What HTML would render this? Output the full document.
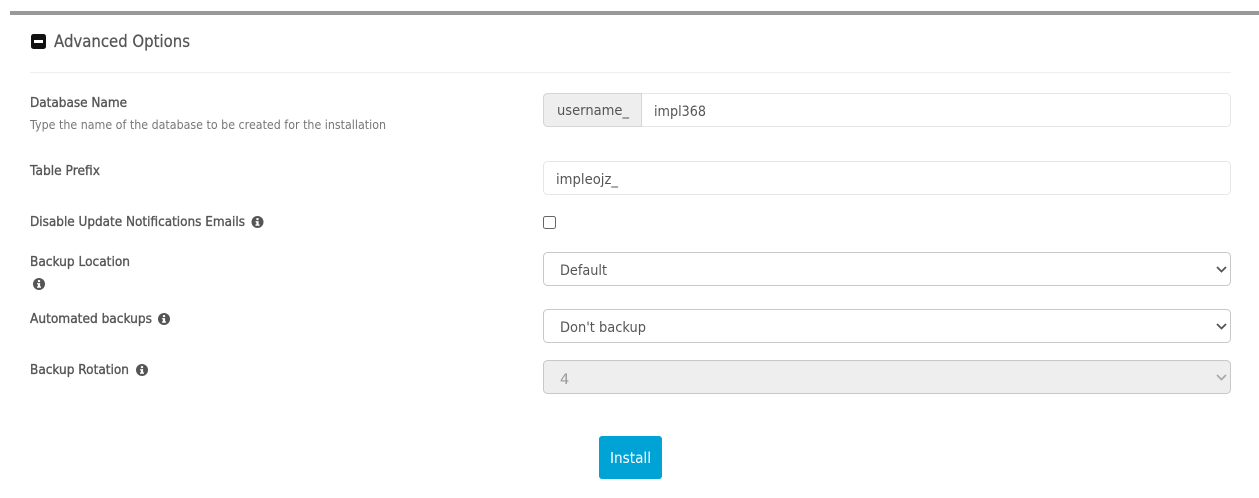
<!DOCTYPE html>
<html><head><meta charset="utf-8">
<style>
html,body{margin:0;padding:0;background:#fff;width:1259px;height:498px;overflow:hidden}
svg{display:block;position:absolute;left:0;top:0}
text{font-family:"DejaVu Sans","Liberation Sans",sans-serif}
.l{font-size:13px;fill:#555;stroke:#555;stroke-width:.35px}
.v{font-size:14.5px;fill:#555}
</style></head><body>
<svg width="1259" height="498" viewBox="0 0 1259 498" xmlns="http://www.w3.org/2000/svg">
<defs>
<g id="i"><circle r="6" fill="#555"/><rect x="-1.1" y="-3.9" width="2.2" height="2" fill="#fff"/><path d="M-1.9-.9H1.1V2.4H2V3.8H-2V2.4H-1.1V.4H-1.9Z" fill="#fff"/></g>
</defs>
<rect x="10" y="11" width="1249" height="4" fill="#999"/>
<rect x="31" y="34" width="15" height="15" rx="2.5" fill="#111"/>
<rect x="34" y="40" width="9" height="3" fill="#fff"/>
<text x="54" y="47" font-size="16.5" fill="#555" stroke="#555" stroke-width=".25" textLength="136" lengthAdjust="spacingAndGlyphs">Advanced Options</text>
<rect x="30" y="72" width="1201" height="1" fill="#eee"/>

<text class="l" x="30" y="107" textLength="97" lengthAdjust="spacingAndGlyphs">Database Name</text>
<text x="30" y="129" font-size="12.5" fill="#777" textLength="356" lengthAdjust="spacingAndGlyphs">Type the name of the database to be created for the installation</text>
<text class="l" x="30" y="175" textLength="70" lengthAdjust="spacingAndGlyphs">Table Prefix</text>
<text class="l" x="30" y="226" textLength="215" lengthAdjust="spacingAndGlyphs">Disable Update Notifications Emails</text>
<use href="#i" x="257.500" y="222"/>
<text class="l" x="30" y="266" textLength="100" lengthAdjust="spacingAndGlyphs">Backup Location</text>
<use href="#i" x="39" y="284"/>
<text class="l" x="30" y="323" textLength="122" lengthAdjust="spacingAndGlyphs">Automated backups</text>
<use href="#i" x="164" y="319"/>
<text class="l" x="30" y="374" textLength="99" lengthAdjust="spacingAndGlyphs">Backup Rotation</text>
<use href="#i" x="142" y="370"/>

<rect x="543.500" y="93.500" width="687" height="33" rx="4" fill="#fff" stroke="#e6e6e6"/>
<path d="M641.500 93.500H547.500a4 4 0 0 0-4 4V122.500a4 4 0 0 0 4 4H641.500Z" fill="#eee" stroke="#d5d5d5"/>
<text class="v" x="557" y="115" textLength="72" lengthAdjust="spacingAndGlyphs">username_</text>
<text class="v" x="654" y="116" textLength="52" lengthAdjust="spacingAndGlyphs">impl368</text>

<rect x="543.500" y="161.500" width="687" height="33" rx="4" fill="#fff" stroke="#e6e6e6"/>
<text class="v" x="556" y="184" textLength="62" lengthAdjust="spacingAndGlyphs">impleojz_</text>

<rect x="543.500" y="216.500" width="12" height="12" rx="2" fill="#fff" stroke="#666"/>

<rect x="543.500" y="252.500" width="687" height="33" rx="4" fill="#fff" stroke="#c8c8c8"/>
<text class="v" x="560" y="275" textLength="47" lengthAdjust="spacingAndGlyphs">Default</text>
<path d="M1217 267l4.500 4.500 4.500-4.500" fill="none" stroke="#555" stroke-width="1.800"/>

<rect x="543.500" y="309.500" width="687" height="33" rx="4" fill="#fff" stroke="#c8c8c8"/>
<text class="v" x="560" y="332" textLength="86" lengthAdjust="spacingAndGlyphs">Don't backup</text>
<path d="M1217 324l4.500 4.500 4.500-4.500" fill="none" stroke="#555" stroke-width="1.800"/>

<rect x="543.500" y="360.500" width="687" height="33" rx="4" fill="#eee" stroke="#c8c8c8"/>
<text x="560" y="384" font-size="14.500" fill="#999">4</text>
<path d="M1217 375l4.500 4.500 4.500-4.500" fill="none" stroke="#aaa" stroke-width="1.800"/>

<rect x="599" y="436" width="63" height="43" rx="3" fill="#00a3d6"/>
<text x="610" y="463" font-size="15" fill="#fff" textLength="41" lengthAdjust="spacingAndGlyphs">Install</text>
</svg>
</body></html>
